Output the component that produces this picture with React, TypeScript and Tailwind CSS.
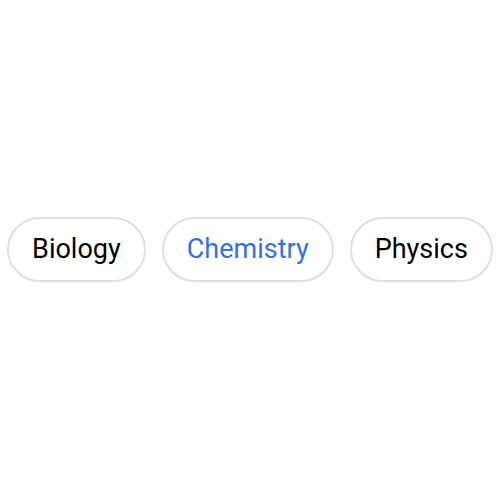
import React from 'react'

const subjects = ['Biology', 'Chemistry', 'Physics']

export default function App() {
  const active = 'Chemistry'
  return (
    <div className="flex h-screen w-full items-center justify-center gap-[16px] bg-white pb-[2px] font-['Roboto',sans-serif]">
      {subjects.map((s) => (
        <button
          key={s}
          className={`h-[65px] rounded-full border-2 border-[#e0e0e0] bg-white px-[23px] text-[27px] ${
            s === active ? 'text-[#3672d7]' : 'text-black'
          }`}
        >
          {s}
        </button>
      ))}
    </div>
  )
}
